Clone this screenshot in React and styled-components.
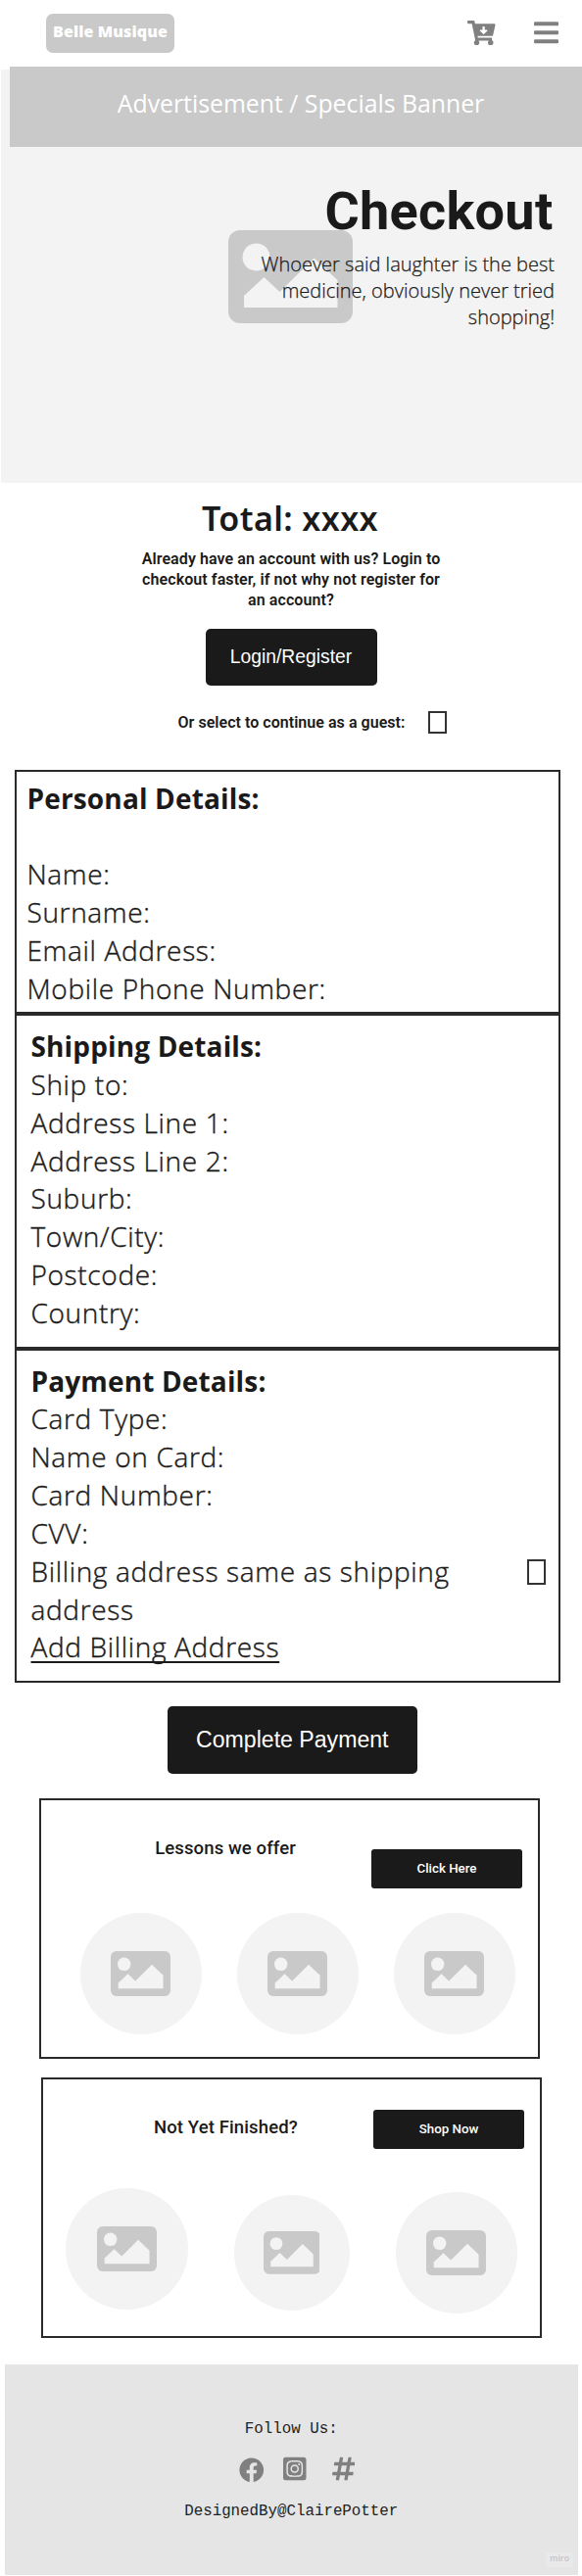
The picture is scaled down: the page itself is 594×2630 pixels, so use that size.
import React from "react";
import styled, { createGlobalStyle } from "styled-components";
import {
  FaBars,
  FaCartArrowDown,
  FaFacebook,
  FaHashtag,
  FaInstagramSquare,
} from "react-icons/fa";

const ink = "#1a1a1a";
const grey = "#c9c9c9";
const pale = "#f3f3f3";
const icon = "#808080";

const GlobalStyle = createGlobalStyle`
  *, *::before, *::after { box-sizing: border-box; }
  body { margin: 0; background: #fff; color: ${ink}; font-family: Roboto, sans-serif; }
  h1, h2, h3, p { margin: 0; }
  button { border: 0; padding: 0; cursor: pointer; }
`;

const Page = styled.div`
  width: 594px;
  height: 2630px;
  overflow: hidden;
  display: flex;
  flex-direction: column;
  align-items: flex-start;
  > * { flex-shrink: 0; }
`;

const Header = styled.header`
  width: 100%;
  height: 68px;
  display: flex;
  align-items: flex-start;
  padding: 14px 24px 0 47px;
`;

const Logo = styled.div`
  width: 131px;
  height: 39.5px;
  padding-bottom: 4px;
  display: flex;
  align-items: center;
  justify-content: center;
  border-radius: 7px;
  background: ${grey};
  color: #fff;
  font: 800 16px "Open Sans", sans-serif;
  letter-spacing: 0.1px;
`;

const HeaderIcons = styled.div`
  margin-left: auto;
  height: 38.6px;
  display: flex;
  align-items: center;
  gap: 39.5px;
  color: ${icon};
`;

const CartIcon = styled(FaCartArrowDown)`
  width: 28.5px;
  height: 25.4px;
`;

const MenuIcon = styled(FaBars)`
  width: 25px;
  height: 28.5px;
`;

const Banner = styled.div`
  position: relative;
  z-index: 1;
  align-self: stretch;
  height: 81.5px;
  margin-left: 10px;
  padding: 0 0 7px 10px;
  display: flex;
  align-items: center;
  justify-content: center;
  background: ${grey};
  color: #fff;
  font: 400 24.8px "Open Sans", sans-serif;
`;

const Hero = styled.section`
  align-self: stretch;
  height: 422px;
  margin: -78.5px 0 0 1px;
  display: grid;
  background: ${pale};
  > * { grid-area: 1 / 1; }
`;

const HeroPicture = styled.div`
  width: 127px;
  height: 95px;
  margin: 163.7px 0 0 232px;
`;

const HeroText = styled.div`
  position: relative;
  justify-self: end;
  width: 340px;
  padding: 114.5px 28px 0 0;
  text-align: right;
`;

const HeroTitle = styled.h1`
  margin-right: 1.5px;
  font-size: 54px;
  font-weight: 700;
  line-height: 60px;
  letter-spacing: 0.3px;
`;

const HeroCopy = styled.p`
  margin-top: 10.9px;
  font-family: "Open Sans", sans-serif;
  font-size: 20px;
  font-weight: 300;
  line-height: 27px;
  -webkit-text-stroke: 0.25px ${ink};
`;

const Summary = styled.section`
  width: 100%;
  padding-top: 16px;
  display: flex;
  flex-direction: column;
  align-items: center;
`;

const Total = styled.h2`
  margin-right: 2px;
  font-family: "Noto Sans", sans-serif;
  font-size: 34px;
  font-weight: 600;
  line-height: 40px;
  letter-spacing: 0.4px;
`;

const Note = styled.p`
  font-size: 16px;
  font-weight: 600;
  line-height: 21px;
  letter-spacing: ${(p) => p.$spacing || "0.09px"};
  text-align: center;
`;

const AccountNote = styled(Note)`
  width: 312px;
  margin-top: 11.2px;
`;

const Button = styled.button`
  display: flex;
  align-items: center;
  justify-content: center;
  border-radius: 5px;
  background: ${ink};
  color: #fff;
`;

const LoginButton = styled(Button)`
  width: 175px;
  height: 58.3px;
  margin-top: 18.8px;
  font: 400 19.3px "Liberation Sans", sans-serif;
`;

const PayButton = styled(Button)`
  width: 255px;
  height: 69.2px;
  margin: 24.3px 0 0 170.8px;
  padding-bottom: 1px;
  font: 400 23.1px "Liberation Sans", sans-serif;
`;

const GuestRow = styled.div`
  align-self: stretch;
  height: 22.4px;
  margin-top: 26px;
  padding: 0 138px 0 181.5px;
  display: flex;
  justify-content: space-between;
  align-items: center;
`;

const Checkbox = styled.span`
  flex: none;
  width: 19px;
  height: ${(p) => p.$height}px;
  border: 2px solid #333;
  background: #fff;
`;

const Details = styled.section`
  width: 557px;
  margin: 37.3px 0 0 15px;
`;

const Panel = styled.div`
  height: ${(p) => p.$height}px;
  padding: ${(p) => p.$top}px 13px 0 ${(p) => p.$left}px;
  border: 2px solid #2a2a2a;
  font: 300 28px/38.85px "Open Sans", sans-serif;
  letter-spacing: 0.66px;
  -webkit-text-stroke: 0.4px ${ink};
`;

const PanelTitle = styled.h3`
  margin-bottom: ${(p) => (p.$spaced ? "38.2px" : "0")};
  font-size: 28px;
  font-weight: 700;
  letter-spacing: 0.15px;
  -webkit-text-stroke: 0;
`;

const BillingRow = styled.div`
  display: flex;
  justify-content: space-between;
  align-items: flex-start;
  p { width: 440px; }
  ${Checkbox} { margin-top: 7px; }
`;

const BillingLink = styled.a`
  text-decoration: underline;
  text-decoration-thickness: 2.4px;
  text-underline-offset: 4px;
  text-decoration-skip-ink: none;
`;

const Card = styled.section`
  width: 511px;
  height: 266px;
  margin: ${(p) => p.$margin};
  border: 2px solid #2a2a2a;
`;

const CardHead = styled.div`
  height: ${(p) => p.$height}px;
  padding: 0 16px 0 ${(p) => p.$left}px;
  display: flex;
  align-items: flex-start;
  justify-content: space-between;
`;

const CardTitle = styled.h3`
  margin-top: 37.9px;
  font-size: 18.5px;
  font-weight: 500;
  line-height: 22px;
  letter-spacing: 0.12px;
`;

const CardButton = styled(Button)`
  width: 154px;
  height: 40px;
  margin-top: ${(p) => p.$top}px;
  border-radius: 3px;
  font: 500 13.3px Roboto, sans-serif;
`;

const Pictures = styled.div`
  display: flex;
  align-items: flex-start;
  gap: ${(p) => p.$gap}px;
  padding-left: ${(p) => p.$left}px;
`;

const Circle = styled.div`
  width: ${(p) => p.$size}px;
  height: ${(p) => p.$size}px;
  margin-top: ${(p) => p.$drop || 0}px;
  display: flex;
  align-items: center;
  justify-content: center;
  border-radius: 50%;
  background: ${pale};
  svg { width: 49%; height: 37%; }
`;

const Footer = styled.footer`
  width: 584.5px;
  height: 215px;
  margin: 27px 0 0 5px;
  padding-top: 56.5px;
  position: relative;
  display: flex;
  flex-direction: column;
  align-items: center;
  background: #e5e5e5;
  color: #222;
  font: 400 15.8px/20px "Liberation Mono", monospace;
`;

const Social = styled.div`
  align-self: stretch;
  height: 26px;
  margin: 18.5px 0 19.5px;
  padding-left: 239px;
  display: flex;
  align-items: center;
  color: ${icon};
`;

const FacebookIcon = styled(FaFacebook)`
  width: 25.5px;
  height: 25.5px;
`;

const InstagramIcon = styled(FaInstagramSquare)`
  width: 23.5px;
  height: 27px;
  margin: -3px 0 0 19.5px;
`;

const HashIcon = styled(FaHashtag)`
  width: 23.5px;
  height: 27px;
  margin: -3px 0 0 26px;
`;

const Badge = styled.span`
  position: absolute;
  right: 4.5px;
  bottom: 8px;
  width: 28px;
  height: 15px;
  display: flex;
  justify-content: center;
  background: #e9e9e9;
  color: #c3c3cb;
  font: 600 8.8px/13px "Open Sans", sans-serif;
`;

function PictureIcon() {
  return (
    <svg
      width="100%"
      height="100%"
      viewBox="0 0 127 95"
      preserveAspectRatio="none"
      display="block"
    >
      <rect width="127" height="95" rx="12" fill={grey} />
      <circle cx="28.5" cy="27.5" r="14" fill={pale} />
      <path d="M16 79V67L36.5 48 52.5 63 87.5 28.5 111.5 51V79Z" fill={pale} />
    </svg>
  );
}

function Promo({ title, action, margin, left, headHeight, buttonTop, row, circles }) {
  return (
    <Card $margin={margin}>
      <CardHead $left={left} $height={headHeight}>
        <CardTitle>{title}</CardTitle>
        <CardButton $top={buttonTop}>{action}</CardButton>
      </CardHead>
      <Pictures $left={row.left} $gap={row.gap}>
        {circles.map((c, i) => (
          <Circle key={i} $size={c.size} $drop={c.drop}>
            <PictureIcon />
          </Circle>
        ))}
      </Pictures>
    </Card>
  );
}

export default function App() {
  return (
    <Page>
      <GlobalStyle />
      <Header>
        <Logo>Belle Musique</Logo>
        <HeaderIcons>
          <CartIcon />
          <MenuIcon />
        </HeaderIcons>
      </Header>
      <Banner>Advertisement / Specials Banner</Banner>
      <Hero>
        <HeroPicture>
          <PictureIcon />
        </HeroPicture>
        <HeroText>
          <HeroTitle>Checkout</HeroTitle>
          <HeroCopy>
            Whoever said laughter is the best
            <br />
            medicine, obviously never tried
            <br />
            shopping!
          </HeroCopy>
        </HeroText>
      </Hero>

      <Summary>
        <Total>Total: xxxx</Total>
        <AccountNote>
          Already have an account with us? Login to
          <br />
          checkout faster, if not why not register for
          <br />
          an account?
        </AccountNote>
        <LoginButton>Login/Register</LoginButton>
        <GuestRow>
          <Note $spacing="0.04px">Or select to continue as a guest:</Note>
          <Checkbox $height={22.4} />
        </GuestRow>
      </Summary>

      <Details>
        <Panel $height={249} $top={8.4} $left={10.5}>
          <PanelTitle $spaced>Personal Details:</PanelTitle>
          <p>Name:</p>
          <p>Surname:</p>
          <p>Email Address:</p>
          <p>Mobile Phone Number:</p>
        </Panel>
        <Panel $height={342} $top={12} $left={14.5}>
          <PanelTitle>Shipping Details:</PanelTitle>
          <p>Ship to:</p>
          <p>Address Line 1:</p>
          <p>Address Line 2:</p>
          <p>Suburb:</p>
          <p>Town/City:</p>
          <p>Postcode:</p>
          <p>Country:</p>
        </Panel>
        <Panel $height={341} $top={11.6} $left={14.5}>
          <PanelTitle>Payment Details:</PanelTitle>
          <p>Card Type:</p>
          <p>Name on Card:</p>
          <p>Card Number:</p>
          <p>CVV:</p>
          <BillingRow>
            <p>Billing address same as shipping address</p>
            <Checkbox $height={26.4} />
          </BillingRow>
          <BillingLink>Add Billing Address</BillingLink>
        </Panel>
      </Details>

      <PayButton>Complete Payment</PayButton>

      <Promo
        title="Lessons we offer"
        action="Click Here"
        margin="24.5px 0 0 40px"
        left={116.2}
        headHeight={114.7}
        buttonTop={50}
        row={{ left: 39.5, gap: 35.5 }}
        circles={[{ size: 124.5 }, { size: 124.5 }, { size: 124.5 }]}
      />
      <Promo
        title="Not Yet Finished?"
        action="Shop Now"
        margin="19px 0 0 42px"
        left={113}
        headHeight={110.7}
        buttonTop={31}
        row={{ left: 23, gap: 47 }}
        circles={[{ size: 124.5 }, { size: 118, drop: 7.5 }, { size: 124.5, drop: 4 }]}
      />

      <Footer>
        <div>Follow Us:</div>
        <Social>
          <FacebookIcon />
          <InstagramIcon />
          <HashIcon />
        </Social>
        <div>DesignedBy@ClairePotter</div>
        <Badge>miro</Badge>
      </Footer>
    </Page>
  );
}
